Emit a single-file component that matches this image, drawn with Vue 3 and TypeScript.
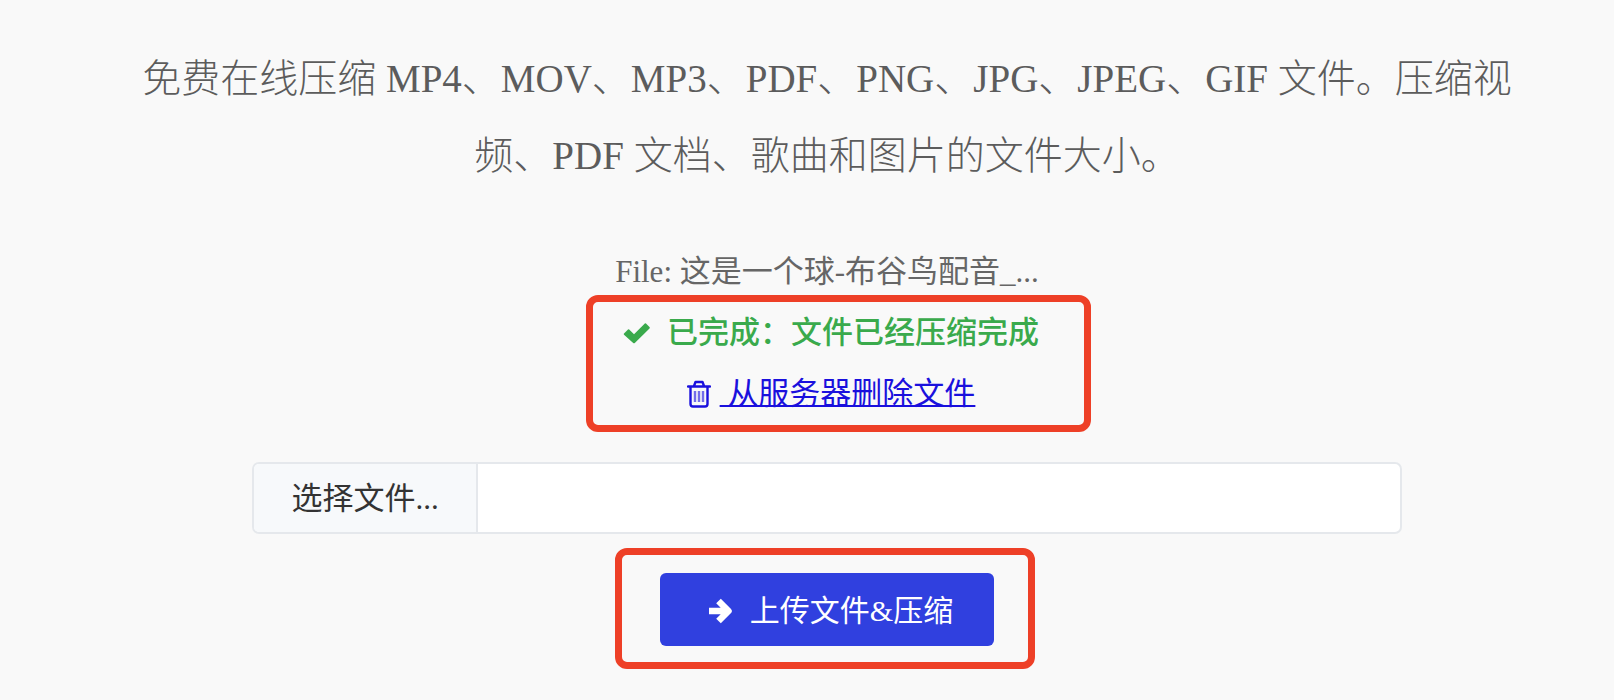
<script setup lang="ts">
import { ref } from 'vue'

const fileName = ref('')
const removed = ref(false)

function onPick(event: Event) {
  const input = event.target as HTMLInputElement
  fileName.value = input.files?.[0]?.name ?? ''
}
</script>

<template>
  <main class="page">
    <p class="intro">免费在线压缩 MP4、MOV、MP3、PDF、PNG、JPG、JPEG、GIF 文件。压缩视频、PDF 文档、歌曲和图片的文件大小。</p>

    <form class="compress" @submit.prevent>
      <div class="file-line">File: 这是一个球-布谷鸟配音_...</div>
      <div class="result">
        <div class="done">
          <svg class="icon-check" viewBox="0 0 28 22" aria-hidden="true">
            <path d="M1 11.5 5 7.5Q5.600 7 6.200 7.500L11 12.300 21.800 1.500Q22.400 1 23 1.500L26.500 5Q27.200 5.700 26.500 6.400L11.800 21Q11 21.700 10.200 21L1 12.800Q.4 12.100 1 11.500Z" fill="currentColor" />
          </svg>
          <strong>已完成：文件已经压缩完成</strong>
        </div>
        <a v-if="!removed" class="remove" href="#" @click.prevent="removed = true">
          <svg class="icon-trash" viewBox="0 0 24 28" aria-hidden="true">
            <path d="M1 6.500H23M7 6 8.500 2H15.500L17 6M3.500 7V24Q3.500 26.500 6 26.500H18Q20.500 26.500 20.500 24V7" fill="none" stroke="currentColor" stroke-width="2.400" stroke-linejoin="round" stroke-linecap="round" />
            <path d="M8 11V22M12 11V22M16 11V22" fill="none" stroke="currentColor" stroke-width="2.400" opacity=".6" />
          </svg>
          <span class="remove-text">&nbsp;从服务器删除文件</span>
        </a>
      </div>

      <div class="picker">
        <label class="picker-label" for="upload">选择文件...</label>
        <span class="picker-name">{{ fileName }}</span>
        <input id="upload" class="picker-input" type="file" @change="onPick" />
      </div>

      <div class="submit-wrap">
        <button class="submit" type="submit">
          <svg class="icon-arrow" viewBox="0 0 28 28" aria-hidden="true">
            <path d="M3 14H22M12.500 4 22.500 14 12.500 24" fill="none" stroke="currentColor" stroke-width="6.500" stroke-linejoin="round" />
          </svg>
          <span>上传文件&amp;压缩</span>
        </button>
      </div>
    </form>
  </main>
</template>

<style>
body {
  margin: 0;
  background: #f9f9f9;
}
</style>

<style scoped>
.page {
  box-sizing: border-box;
  padding: 40px 0 24px 40px;
  color: #666;
  font-family: "Liberation Serif", "Noto Sans CJK SC", serif;
  font-size: 31px;
  line-height: 61px;
  text-align: center;
}

.intro {
  max-width: 1400px;
  margin: 0 auto 47px;
  color: #5c5c5c;
  font-size: 39px;
  font-weight: 300;
  line-height: 77px;
}

.compress {
  display: flex;
  flex-direction: column;
  align-items: center;
}

.result {
  position: relative;
  display: flex;
  flex-direction: column;
  align-items: center;
  margin-left: 8px;
}

.result::after,
.submit-wrap::after {
  content: "";
  position: absolute;
  border: 7px solid #ee4027;
  border-radius: 12px;
  pointer-events: none;
}

.result::after {
  inset: -7px -52px -8px -37px;
}

.done,
.remove {
  display: flex;
  align-items: center;
}

.done {
  gap: 16px;
  color: #3aaa4c;
}

.done strong {
  font-weight: 500;
}

.icon-check {
  width: 28px;
  height: 22px;
}

.remove {
  gap: 9px;
  color: #1a10dd;
  text-decoration: none;
}

.remove-text {
  text-decoration: underline;
  text-decoration-thickness: 2px;
}

.icon-trash {
  width: 24px;
  height: 28px;
}

.picker {
  position: relative;
  box-sizing: border-box;
  display: flex;
  width: 73%;
  height: 72px;
  margin-top: 38px;
  border: 2px solid #e5e8ec;
  border-radius: 7px;
  background: #fff;
  overflow: hidden;
}

.picker-label {
  padding: 0 37px;
  border-right: 2px solid #e5e8ec;
  background: #f7f9fb;
  color: #333;
  line-height: 70px;
}

.picker-name {
  flex: 1;
  padding: 0 16px;
  text-align: left;
}

.picker-input {
  position: absolute;
  inset: 0;
  width: 100%;
  opacity: 0;
  cursor: pointer;
}

.submit-wrap {
  position: relative;
  margin-top: 39px;
}

.submit-wrap::after {
  inset: -25px -41px -23px -45px;
}

.submit {
  display: flex;
  align-items: center;
  gap: 16px;
  height: 73px;
  padding: 2px 41px 0 46px;
  border: 0;
  border-radius: 6px;
  background: #3040df;
  color: #fff;
  font: inherit;
  font-size: 30px;
  cursor: pointer;
}

.icon-arrow {
  width: 28px;
  height: 28px;
}
</style>
